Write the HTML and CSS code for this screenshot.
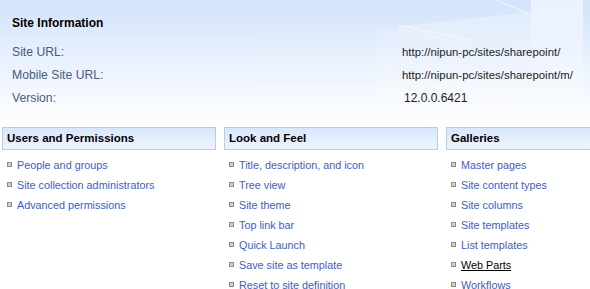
FILE: index.html
```html
<!DOCTYPE html>
<html>
<head>
<meta charset="utf-8">
<link rel="stylesheet" href="styles.css">
</head>
<body>
<div class="page">
  <section class="siteinfo">
    <svg class="deco" width="590" height="120" viewBox="0 0 590 120" aria-hidden="true">
      <defs>
        <linearGradient id="band" x1="0" y1="0" x2="0" y2="1">
          <stop offset="0" stop-color="#ffffff" stop-opacity="0.55"/>
          <stop offset="1" stop-color="#ffffff" stop-opacity="0.15"/>
        </linearGradient>
        <linearGradient id="panel" x1="0" y1="0" x2="0" y2="1">
          <stop offset="0" stop-color="#ffffff" stop-opacity="0.25"/>
          <stop offset="1" stop-color="#ffffff" stop-opacity="0.05"/>
        </linearGradient>
      </defs>
      <rect x="531" y="0" width="52" height="98" fill="url(#band)"/>
      <polygon points="396,27 531,12 531,120 396,120" fill="url(#panel)"/>
      <line x1="496" y1="0" x2="530" y2="14" stroke="#ffffff" stroke-opacity="0.7" stroke-width="1"/>
      <line x1="398" y1="25" x2="470" y2="40" stroke="#ffffff" stroke-opacity="0.6" stroke-width="1"/>
      <line x1="398" y1="29" x2="460" y2="43" stroke="#ffffff" stroke-opacity="0.45" stroke-width="1"/>
      <rect x="377" y="30" width="19" height="90" fill="#ffffff" fill-opacity="0.18"/>
    </svg>
    <h2 class="info-title">Site Information</h2>
    <div class="info-grid">
      <span class="label">Site URL:</span>
      <span class="value">http://nipun-pc/sites/sharepoint/</span>
      <span class="label">Mobile Site URL:</span>
      <span class="value">http://nipun-pc/sites/sharepoint/m/</span>
      <span class="label">Version:</span>
      <span class="value version">12.0.0.6421</span>
    </div>
  </section>

  <section class="columns">
    <div class="col">
      <h3 class="col-head">Users and Permissions</h3>
      <ul class="links">
        <li><a href="#">People and groups</a></li>
        <li><a href="#">Site collection administrators</a></li>
        <li><a href="#">Advanced permissions</a></li>
      </ul>
    </div>
    <div class="col">
      <h3 class="col-head">Look and Feel</h3>
      <ul class="links">
        <li><a href="#">Title, description, and icon</a></li>
        <li><a href="#">Tree view</a></li>
        <li><a href="#">Site theme</a></li>
        <li><a href="#">Top link bar</a></li>
        <li><a href="#">Quick Launch</a></li>
        <li><a href="#">Save site as template</a></li>
        <li><a href="#">Reset to site definition</a></li>
      </ul>
    </div>
    <div class="col col-last">
      <h3 class="col-head">Galleries</h3>
      <ul class="links">
        <li><a href="#">Master pages</a></li>
        <li><a href="#">Site content types</a></li>
        <li><a href="#">Site columns</a></li>
        <li><a href="#">Site templates</a></li>
        <li><a href="#">List templates</a></li>
        <li><a href="#" class="active">Web Parts</a></li>
        <li><a href="#">Workflows</a></li>
      </ul>
    </div>
  </section>
</div>
</body>
</html>
```

FILE: styles.css
```css
html, body {
  margin: 0;
  padding: 0;
  background: #ffffff;
}
body {
  width: 590px;
  height: 289px;
  overflow: hidden;
  font-family: "Liberation Sans", Arial, sans-serif;
}
.page {
  width: 590px;
}
.siteinfo {
  position: relative;
  height: 120px;
  box-sizing: border-box;
  padding: 16px 0 0 12px;
  background: linear-gradient(to bottom, #d3e3fb 0%, #e4eefd 40%, #f4f8fe 75%, #fcfdff 100%);
}
.deco {
  position: absolute;
  left: 0;
  top: 0;
  z-index: 0;
}
.info-title {
  position: relative;
  margin: 0;
  font-size: 12px;
  line-height: 14px;
  font-weight: bold;
  color: #000000;
}
.info-grid {
  position: relative;
  margin-top: 10px;
  display: grid;
  grid-template-columns: 390px auto;
  grid-auto-rows: 23px;
  align-items: center;
}
.label {
  font-size: 12.2px;
  color: #4a5a80;
}
.value {
  font-size: 11.4px;
  color: #1c1c1c;
}
.value.version {
  padding-left: 2px;
  font-size: 12px;
}
.columns {
  display: flex;
  gap: 8px;
  padding: 7px 0 0 2px;
  height: 162px;
  overflow: hidden;
}
.col {
  flex: 0 0 214px;
  width: 214px;
}
.col.col-last {
  flex: 1 1 0;
  width: auto;
  min-width: 0;
}
.col-last .col-head {
  border-right: none;
}
.col-head {
  margin: 0;
  height: 23px;
  box-sizing: border-box;
  border: 1px solid #b4cdf2;
  background: linear-gradient(to bottom, #d8e6fc 0%, #e6effd 60%, #eef4fe 100%);
  padding-left: 4px;
  font-size: 11.5px;
  line-height: 21px;
  font-weight: bold;
  color: #000000;
  white-space: nowrap;
}
.links {
  list-style: none;
  margin: 5px 0 0 0;
  padding: 0;
}
.links li {
  display: flex;
  align-items: center;
  height: 20px;
  padding-left: 5px;
}
.links li::before {
  content: "";
  display: block;
  width: 5px;
  height: 5px;
  box-sizing: border-box;
  border: 1px solid #8c8c8c;
  background: #cfcfcf;
  margin-right: 5px;
  margin-top: -1px;
}
.links a {
  font-size: 10.8px;
  color: #3d5dc4;
  text-decoration: none;
  white-space: nowrap;
}
.links a.active {
  color: #000000;
  text-decoration: underline;
}
```
